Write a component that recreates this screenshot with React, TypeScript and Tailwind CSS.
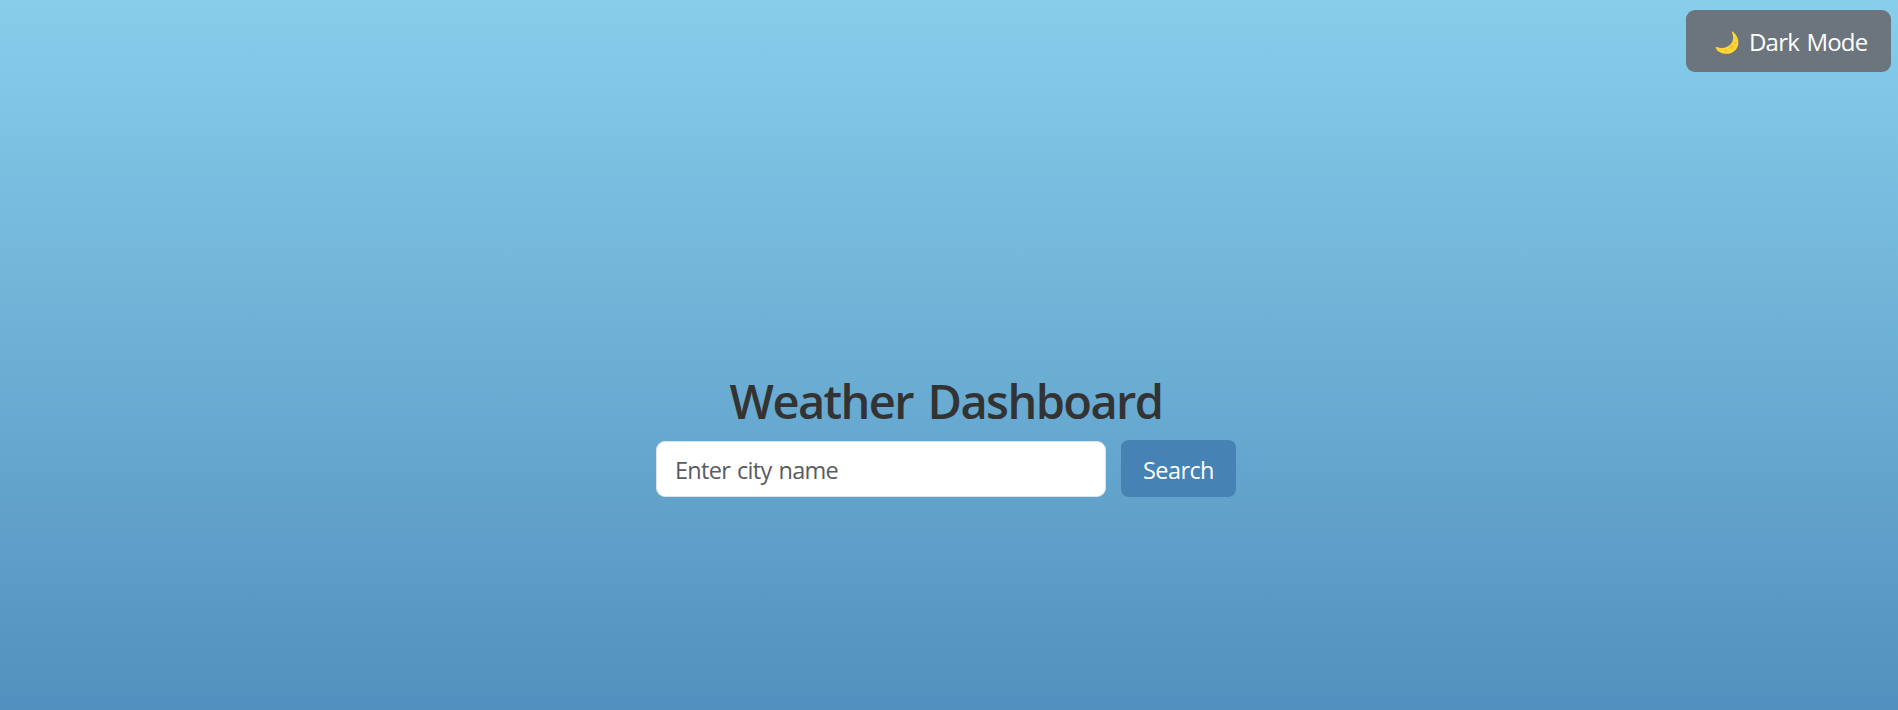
import { useState } from "react";

function MoonIcon() {
  return (
    <svg viewBox="0 0 24 24" className="mt-[4px] h-[24px] w-[24px] shrink-0" aria-hidden="true">
      <path d="M18 .8C21.500 4 23.900 8.100 23.300 12.700C22.500 18.900 17.600 22.800 11.800 22.800C6.800 22.800 2.200 20.600.7 17C.4 16.100 1 15.700 1.800 16C7 18 12.800 16.800 16 12.800C18.800 9.300 18.500 5.200 17 1.700C16.700.8 17.400.3 18 .8Z" fill="#fdd835" />
      <g fill="#fbc02d">
        <circle cx="16.300" cy="15.800" r="2.200" />
        <circle cx="20.300" cy="11.700" r="1.300" />
        <circle cx="10.800" cy="19.200" r="1.300" />
        <circle cx="20.300" cy="6.500" r=".8" />
        <circle cx="6.300" cy="18.500" r=".9" />
      </g>
    </svg>
  );
}

export default function App() {
  const [city, setCity] = useState("");
  return (
    <div className="flex h-[710px] flex-col overflow-hidden bg-[linear-gradient(to_bottom,#87ceeb_0px,#4682b4_868px)] font-['Open_Sans','Noto_Sans',sans-serif] text-[#333333]">
      <header className="flex justify-end pt-[10px] pr-[7px]">
        <button className="flex h-[62px] w-[205px] items-center rounded-[9px] bg-[#6c757d] pl-[29px] text-[24px] text-white">
          <MoonIcon />
          <span className="ml-[10px] pt-[2px] tracking-[-0.8px] whitespace-nowrap [word-spacing:2px]">Dark Mode</span>
        </button>
      </header>
      <main className="mt-[300px] flex flex-col items-center pr-[6px]">
        <h1 className="h-[58px] text-[47px] leading-[58px] font-semibold tracking-[-1.6px] whitespace-nowrap [word-spacing:4px]">Weather Dashboard</h1>
        <form className="mt-[10px] flex w-[580px] items-end justify-between" onSubmit={(e) => e.preventDefault()}>
          <input
            value={city}
            onChange={(e) => setCity(e.target.value)}
            placeholder="Enter city name"
            className="h-[56px] w-[450px] rounded-[9px] border border-[#dee2e6] bg-white pt-[1px] pl-[18px] text-[23.5px] tracking-[-0.7px] outline-none [word-spacing:1.5px] placeholder:text-[#595c5f]"
          />
          <button className="h-[57px] w-[115px] rounded-[8px] bg-[#4682b4] pt-[4px] text-[23.5px] tracking-[-0.6px] text-white">Search</button>
        </form>
      </main>
    </div>
  );
}
